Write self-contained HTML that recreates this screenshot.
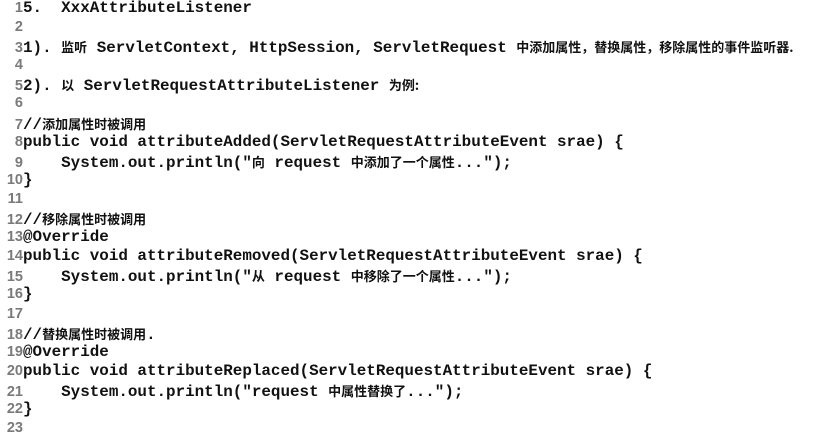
<!DOCTYPE html>
<html><head><meta charset="utf-8"><style>
body{margin:0;background:#fff;width:821px;height:427px;overflow:hidden}
.c{position:absolute;left:0;top:-1px}
.l{height:19.1px;line-height:19.1px;white-space:pre;font-family:"Liberation Mono",monospace;font-weight:bold;font-size:15.9px;color:#111}
.n{display:inline-block;width:23px;text-align:right;color:#7a7a7a;font-weight:bold;font-family:"Liberation Sans",sans-serif;font-size:14.5px}
.z{font-family:"Noto Sans CJK SC",sans-serif;font-size:13px;font-weight:bold}
</style></head><body><div class="c">
<div class="l"><span class="n">1</span>5.  XxxAttributeListener</div>
<div class="l"><span class="n">2</span></div>
<div class="l"><span class="n">3</span>1). <span class="z">监听</span> ServletContext, HttpSession, ServletRequest <span class="z">中添加属性，替换属性，移除属性的事件监听器.</span></div>
<div class="l"><span class="n">4</span></div>
<div class="l"><span class="n">5</span>2). <span class="z">以</span> ServletRequestAttributeListener <span class="z">为例:</span></div>
<div class="l"><span class="n">6</span></div>
<div class="l"><span class="n">7</span>//<span class="z">添加属性时被调用</span></div>
<div class="l"><span class="n">8</span>public void attributeAdded(ServletRequestAttributeEvent srae) {</div>
<div class="l"><span class="n">9</span>    System.out.println("<span class="z">向</span> request <span class="z">中添加了一个属性</span>...");</div>
<div class="l"><span class="n">10</span>}</div>
<div class="l"><span class="n">11</span></div>
<div class="l"><span class="n">12</span>//<span class="z">移除属性时被调用</span></div>
<div class="l"><span class="n">13</span>@Override</div>
<div class="l"><span class="n">14</span>public void attributeRemoved(ServletRequestAttributeEvent srae) {</div>
<div class="l"><span class="n">15</span>    System.out.println("<span class="z">从</span> request <span class="z">中移除了一个属性</span>...");</div>
<div class="l"><span class="n">16</span>}</div>
<div class="l"><span class="n">17</span></div>
<div class="l"><span class="n">18</span>//<span class="z">替换属性时被调用</span>.</div>
<div class="l"><span class="n">19</span>@Override</div>
<div class="l"><span class="n">20</span>public void attributeReplaced(ServletRequestAttributeEvent srae) {</div>
<div class="l"><span class="n">21</span>    System.out.println("request <span class="z">中属性替换了</span>...");</div>
<div class="l"><span class="n">22</span>}</div>
<div class="l"><span class="n">23</span></div>
</div></body></html>
